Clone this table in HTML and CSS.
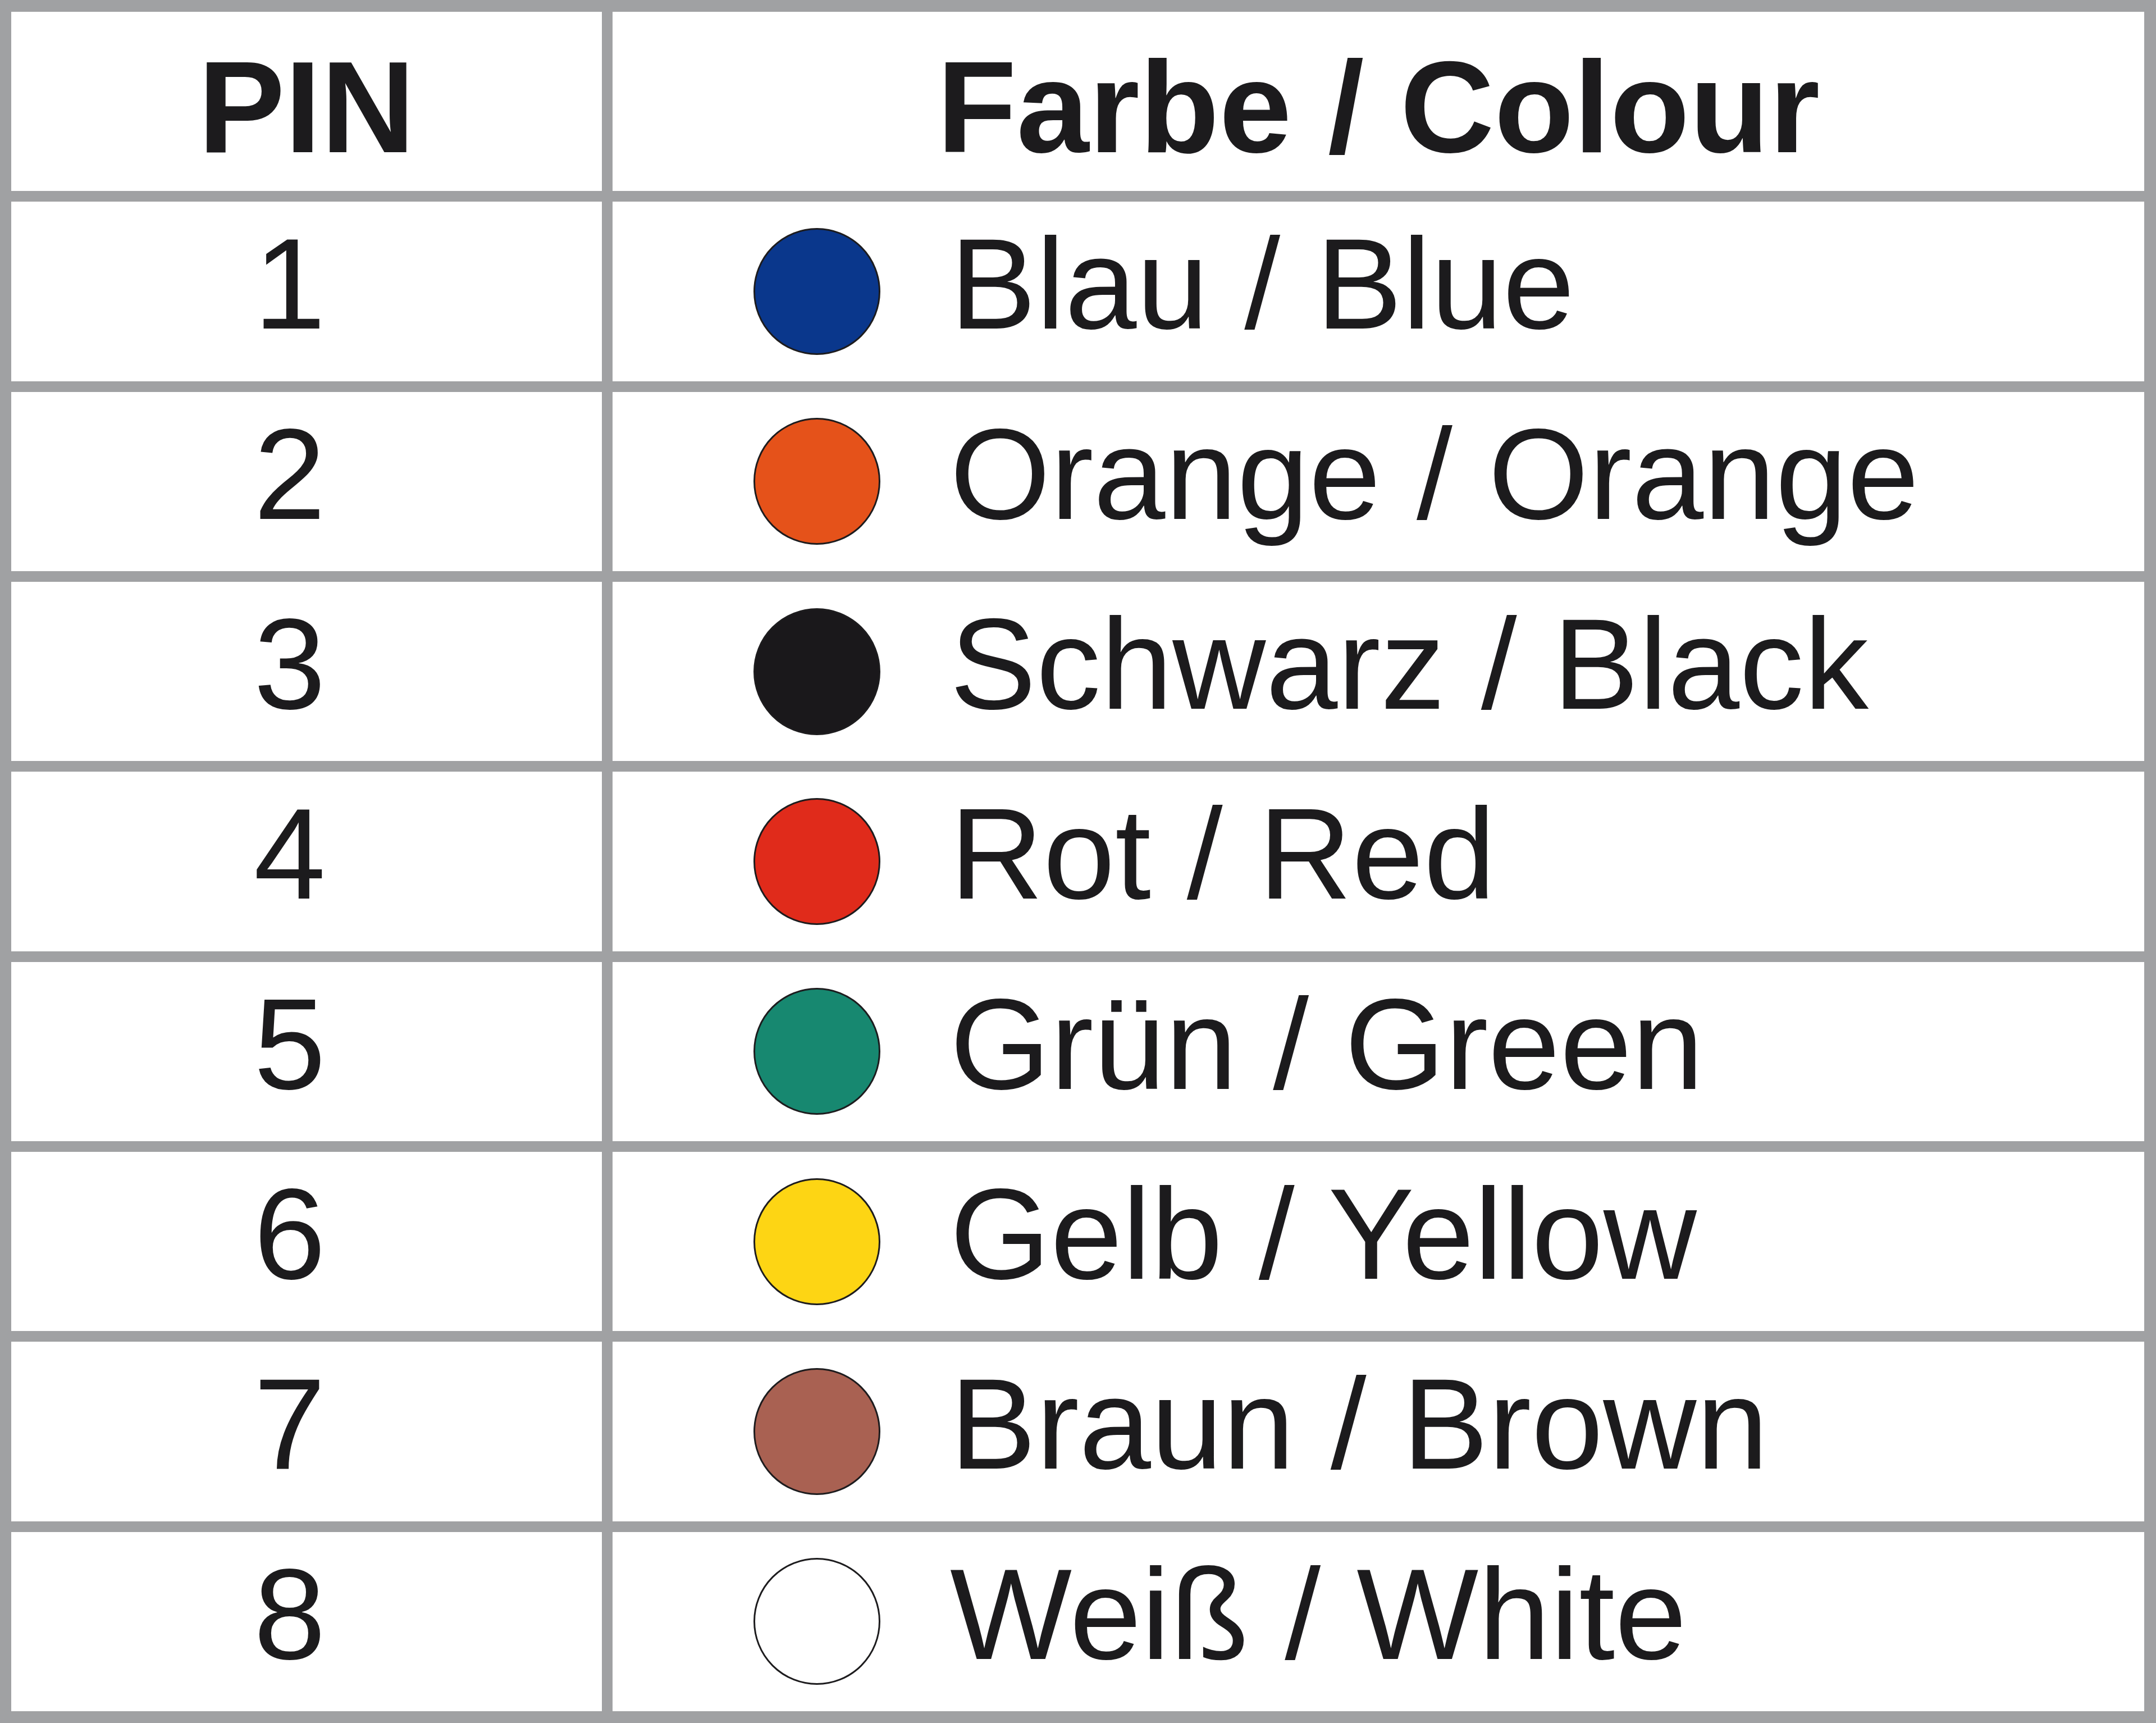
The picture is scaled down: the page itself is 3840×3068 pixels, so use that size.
FILE: index.html
```html
<!DOCTYPE html>
<html lang="de">
<head>
<meta charset="utf-8">
<title>PIN / Farbe</title>
<link rel="stylesheet" href="styles.css">
</head>
<body>
<div class="table">
  <div class="cell head">PIN</div>
  <div class="cell head">Farbe / Colour</div>

  <div class="cell num"><span class="txt">1</span></div>
  <div class="cell colour"><span class="dot blue"></span><span class="txt">Blau / Blue</span></div>

  <div class="cell num"><span class="txt">2</span></div>
  <div class="cell colour"><span class="dot orange"></span><span class="txt">Orange / Orange</span></div>

  <div class="cell num"><span class="txt">3</span></div>
  <div class="cell colour"><span class="dot black"></span><span class="txt">Schwarz / Black</span></div>

  <div class="cell num"><span class="txt">4</span></div>
  <div class="cell colour"><span class="dot red"></span><span class="txt">Rot / Red</span></div>

  <div class="cell num"><span class="txt">5</span></div>
  <div class="cell colour"><span class="dot green"></span><span class="txt">Grün / Green</span></div>

  <div class="cell num"><span class="txt">6</span></div>
  <div class="cell colour"><span class="dot yellow"></span><span class="txt">Gelb / Yellow</span></div>

  <div class="cell num"><span class="txt">7</span></div>
  <div class="cell colour"><span class="dot brown"></span><span class="txt">Braun / Brown</span></div>

  <div class="cell num"><span class="txt">8</span></div>
  <div class="cell colour"><span class="dot white"></span><span class="txt">Weiß / White</span></div>
</div>
</body>
</html>
```

FILE: styles.css
```css
html, body {
  margin: 0;
  padding: 0;
  background: #ffffff;
}

body {
  font-family: "Liberation Sans", Arial, sans-serif;
  color: #1c1b1d;
}

.table {
  width: 3840px;
  height: 3068px;
  box-sizing: border-box;
  background: #a0a1a3;
  padding: 21px 21px 21px 20px;
  display: grid;
  grid-template-columns: 1052px 1fr;
  grid-template-rows: repeat(9, 1fr);
  column-gap: 19px;
  row-gap: 19px;
}

.cell {
  background: #ffffff;
  display: flex;
  align-items: center;
  min-width: 0;
  min-height: 0;
  white-space: nowrap;
}

.head {
  justify-content: center;
  font-weight: bold;
  font-size: 232px;
  padding-top: 20px;
  box-sizing: border-box;
}

.num {
  justify-content: center;
  font-size: 230px;
  padding-right: 60px;
  box-sizing: border-box;
}

.txt {
  display: block;
  padding-bottom: 26px;
}

.colour {
  font-size: 230px;
  padding-left: 251px;
  box-sizing: border-box;
}

.dot {
  flex: none;
  width: 226px;
  height: 226px;
  box-sizing: border-box;
  border-radius: 50%;
  border: 3px solid #1d1c1e;
  margin-right: 124px;
}

.blue   { background: #0a378c; }
.orange { background: #e5521a; }
.black  { background: #1a181b; }
.red    { background: #e02b1b; }
.green  { background: #178870; }
.yellow { background: #fdd514; }
.brown  { background: #a96152; }
.white  { background: #ffffff; }
```
